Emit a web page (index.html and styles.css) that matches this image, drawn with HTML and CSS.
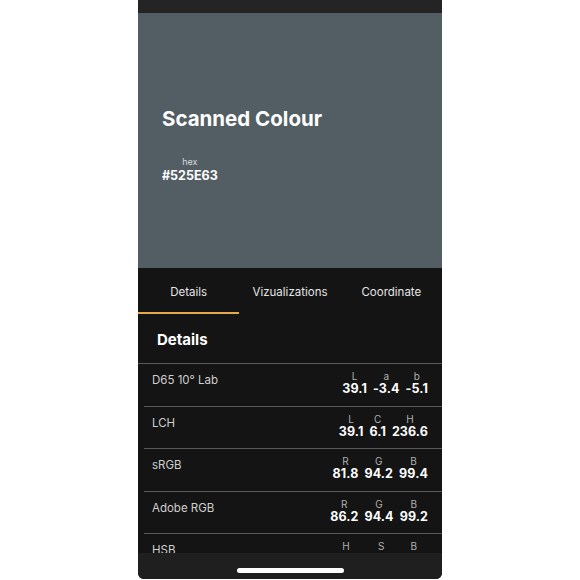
FILE: index.html
```html
<!DOCTYPE html>
<html lang="en">
<head>
    <meta charset="UTF-8">
    <meta name="viewport" content="width=device-width, initial-scale=1.0">
    <title>Scanned Colour</title>
    <link rel="stylesheet" href="styles.css">
</head>
<body>
    <div class="phone">
        <div class="status-bar"></div>

        <div class="hero">
            <h1>Scanned Colour</h1>
            <div class="hex">
                <span class="hex-label">hex</span>
                <span class="hex-value">#525E63</span>
            </div>
        </div>

        <div class="tabs">
            <div class="tab active">Details</div>
            <div class="tab">Vizualizations</div>
            <div class="tab">Coordinate</div>
        </div>

        <div class="content">
            <h2>Details</h2>
            <div class="rows">
                <div class="row">
                    <span class="row-label">D65 10° Lab</span>
                    <div class="values">
                        <div class="value"><span>L</span><b>39.1</b></div>
                        <div class="value"><span>a</span><b>-3.4</b></div>
                        <div class="value"><span>b</span><b>-5.1</b></div>
                    </div>
                </div>
                <div class="row">
                    <span class="row-label">LCH</span>
                    <div class="values">
                        <div class="value"><span>L</span><b>39.1</b></div>
                        <div class="value"><span>C</span><b>6.1</b></div>
                        <div class="value"><span>H</span><b>236.6</b></div>
                    </div>
                </div>
                <div class="row">
                    <span class="row-label">sRGB</span>
                    <div class="values">
                        <div class="value"><span>R</span><b>81.8</b></div>
                        <div class="value"><span>G</span><b>94.2</b></div>
                        <div class="value"><span>B</span><b>99.4</b></div>
                    </div>
                </div>
                <div class="row">
                    <span class="row-label">Adobe RGB</span>
                    <div class="values">
                        <div class="value"><span>R</span><b>86.2</b></div>
                        <div class="value"><span>G</span><b>94.4</b></div>
                        <div class="value"><span>B</span><b>99.2</b></div>
                    </div>
                </div>
                <div class="row">
                    <span class="row-label">HSB</span>
                    <div class="values">
                        <div class="value"><span>H</span><b>196.0</b></div>
                        <div class="value"><span>S</span><b>12.7</b></div>
                        <div class="value"><span>B</span><b>38.8</b></div>
                    </div>
                </div>
            </div>
        </div>

        <div class="home-bar">
            <div class="home-indicator"></div>
        </div>
    </div>
</body>
</html>
```

FILE: styles.css
```css
body {
    background-color: #ffffff;
    font-family: 'Inter', 'Liberation Sans', sans-serif;
    margin: 0;
    padding: 0;
}

.phone {
    width: 304px;
    height: 579px;
    margin-left: 138px;
    display: flex;
    flex-direction: column;
    background-color: #141414;
    border-radius: 0 0 6px 6px;
    overflow: hidden;
}

.status-bar {
    height: 13px;
    background-color: #242424;
}

/* zona del color escaneado */
.hero {
    height: 255px;
    box-sizing: border-box;
    padding: 93px 24px 0;
    background-color: #525e63;
    color: #ffffff;
}

.hero h1 {
    margin: 0;
    font-size: 20.5px;
    line-height: 26px;
    font-weight: 700;
}

.hex {
    display: inline-flex;
    flex-direction: column;
    align-items: center;
    margin-top: 24px;
}

.hex-label {
    font-size: 9px;
    line-height: 11px;
    color: #d8dcde;
}

.hex-value {
    margin-top: 1px;
    font-size: 12.5px;
    line-height: 15px;
    font-weight: 700;
}

.tabs {
    display: flex;
    height: 46px;
}

.tab {
    flex: 1;
    box-sizing: border-box;
    padding-top: 4px;
    line-height: 40px;
    text-align: center;
    font-size: 11.5px;
    color: #e4e4e4;
    border-bottom: 2px solid transparent;
}

.tab.active {
    border-bottom-color: #e4a94a;
}

.content {
    flex: 1;
    overflow: hidden;
}

.content h2 {
    margin: 0;
    height: 50px;
    box-sizing: border-box;
    padding: 17px 19px 0;
    font-size: 15px;
    line-height: 18px;
    font-weight: 700;
    color: #ffffff;
    border-bottom: 1px solid #5a5a5a;
}

.row {
    display: flex;
    justify-content: space-between;
    align-items: flex-start;
    height: 42.5px;
    box-sizing: border-box;
    margin-left: 6px;
    padding: 7px 14px 0 8px;
    border-bottom: 1px solid #5a5a5a;
}

.row-label {
    padding-top: 2px;
    font-size: 11.5px;
    line-height: 14px;
    color: #cfcfcf;
}

.values {
    display: flex;
    gap: 6px;
}

.value {
    display: flex;
    flex-direction: column;
    align-items: center;
}

.value span {
    font-size: 10px;
    line-height: 11px;
    color: #b0b0b0;
}

.value b {
    font-size: 12.5px;
    line-height: 14px;
    font-weight: 700;
    color: #ffffff;
    letter-spacing: 0.1px;
}

.home-bar {
    height: 26px;
    background-color: #1f1f1f;
    display: flex;
    justify-content: center;
    align-items: center;
}

.home-indicator {
    width: 107px;
    height: 5px;
    margin-top: 8px;
    border-radius: 3px;
    background-color: #ffffff;
}
```
